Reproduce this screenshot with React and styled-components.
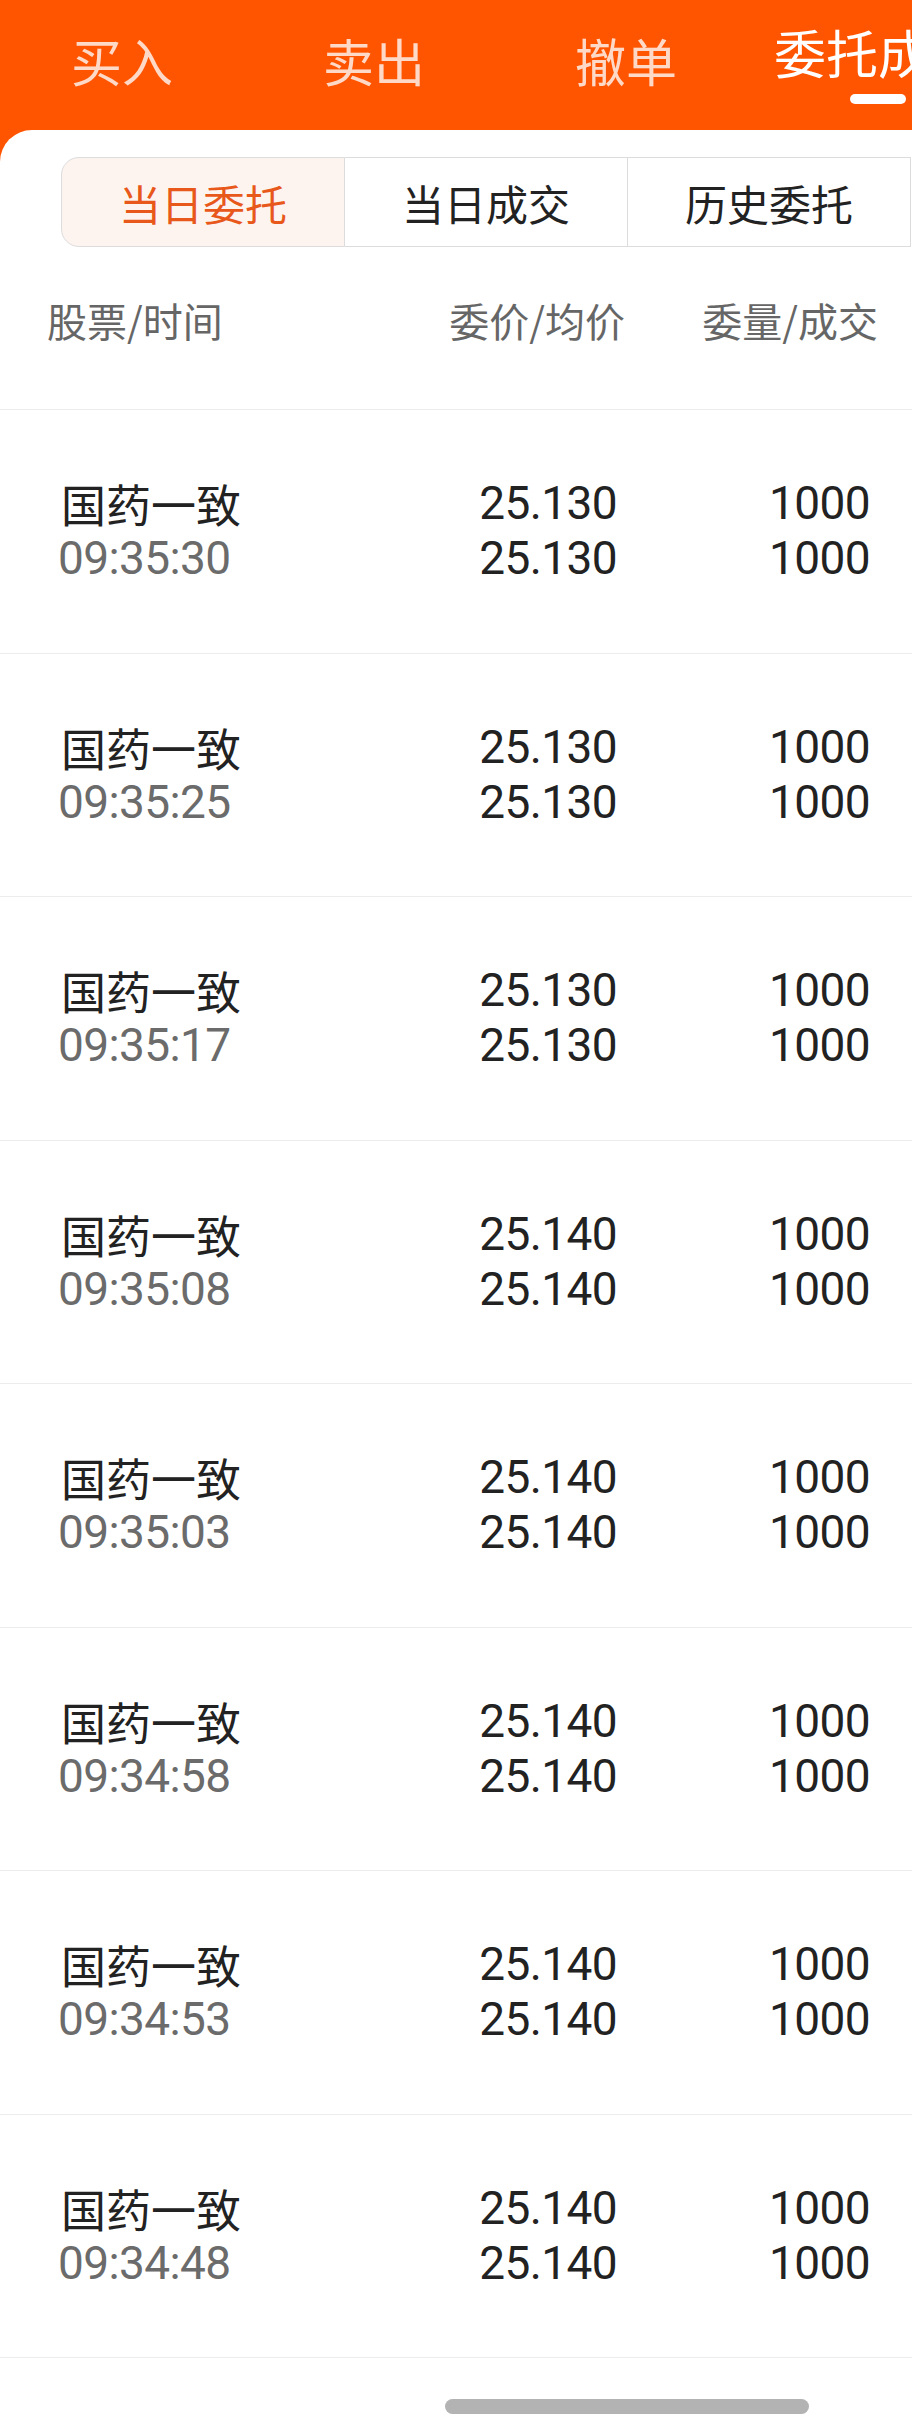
import React from "react";
import styled, { createGlobalStyle } from "styled-components";

const GlobalStyle = createGlobalStyle`
  html, body {
    margin: 0;
    padding: 0;
    background: #ffffff;
  }
  body {
    font-family: Roboto, "Noto Sans CJK SC", "Noto Sans", sans-serif;
    -webkit-font-smoothing: antialiased;
  }
`;

const Shell = styled.div`
  width: 912px;
  height: 2434px;
  overflow: hidden;
  background: #ff5500;
`;

const TopBar = styled.div`
  height: 130px;
  display: flex;
  margin-left: -4px;
`;

const TopTab = styled.div`
  flex: 0 0 252px;
  box-sizing: border-box;
  display: flex;
  flex-direction: column;
  align-items: center;
  justify-content: center;
  padding-bottom: ${({ $active }) => ($active ? "0" : "10px")};
  white-space: nowrap;
  font-family: "Noto Sans CJK SC", sans-serif;
  font-size: ${({ $active }) => ($active ? "52px" : "51px")};
  line-height: 52px;
  color: ${({ $active }) => ($active ? "#ffffff" : "rgba(255, 255, 255, 0.78)")};
`;

const Indicator = styled.span`
  display: block;
  width: 56px;
  height: 10px;
  margin-top: 16px;
  border-radius: 5px;
  background: #ffffff;
`;

const Panel = styled.div`
  background: #ffffff;
  border-top-left-radius: 32px;
  height: 2304px;
`;

const Segments = styled.div`
  display: flex;
  margin: 0 0 0 61px;
  padding-top: 27px;
`;

const Segment = styled.div`
  flex: 0 0 ${({ $w }) => $w}px;
  height: 90px;
  box-sizing: border-box;
  display: flex;
  align-items: center;
  justify-content: center;
  border: 1.5px solid #dcdcdc;
  border-left-width: ${({ $first }) => ($first ? "1.5px" : "0")};
  border-radius: ${({ $first }) => ($first ? "18px 0 0 18px" : "0")};
  background: ${({ $active }) => ($active ? "#fdf4f0" : "#ffffff")};
  color: ${({ $active }) => ($active ? "#e8581a" : "#222222")};
  font-family: "Noto Sans CJK SC", sans-serif;
  font-size: 42px;
`;

const HeadRow = styled.div`
  height: 162px;
  box-sizing: border-box;
  padding: 50px 34px 0 47px;
  display: grid;
  grid-template-columns: 1fr 200px 253px;
  font-family: "Noto Sans CJK SC", sans-serif;
  font-size: 40px;
  line-height: 46px;
  color: #666666;
`;

const Cell = styled.div`
  text-align: ${({ $right }) => ($right ? "right" : "left")};
  white-space: nowrap;
`;

const List = styled.div`
  border-bottom: 1px solid #ececec;
`;

const Row = styled.div`
  height: 243.5px;
  box-sizing: border-box;
  border-top: 1px solid #ececec;
  padding: 0 42px 0 58px;
  display: grid;
  grid-template-columns: 1fr 200px 253px;
  align-items: center;
`;

const Stack = styled.div`
  display: flex;
  flex-direction: column;
  align-items: ${({ $right }) => ($right ? "flex-end" : "flex-start")};
`;

const Name = styled.span`
  font-family: "Noto Sans CJK SC", sans-serif;
  font-size: 45px;
  line-height: 55px;
  color: #222222;
  padding-left: 3px;
`;

const Num = styled.span`
  font-family: Roboto, sans-serif;
  font-size: 46px;
  line-height: 55px;
  letter-spacing: -0.6px;
  color: ${({ $muted }) => ($muted ? "#6b6b6b" : "#222222")};
`;

const HomeBar = styled.div`
  width: 364px;
  height: 15px;
  margin: 41px 0 0 445px;
  border-radius: 8px;
  background: #b3b3b3;
`;

const orders = [
  { time: "09:35:30", price: "25.130" },
  { time: "09:35:25", price: "25.130" },
  { time: "09:35:17", price: "25.130" },
  { time: "09:35:08", price: "25.140" },
  { time: "09:35:03", price: "25.140" },
  { time: "09:34:58", price: "25.140" },
  { time: "09:34:53", price: "25.140" },
  { time: "09:34:48", price: "25.140" },
];

const tabs = ["买入", "卖出", "撤单", "委托成交"];

export default function App() {
  return (
    <>
      <GlobalStyle />
      <Shell>
        <TopBar>
          {tabs.map((t, i) => (
            <TopTab key={t} $active={i === 3}>
              {t}
              {i === 3 && <Indicator />}
            </TopTab>
          ))}
        </TopBar>
        <Panel>
          <Segments>
            <Segment $w={284} $first $active>
              当日委托
            </Segment>
            <Segment $w={283}>当日成交</Segment>
            <Segment $w={283}>历史委托</Segment>
          </Segments>
          <HeadRow>
            <Cell>股票/时间</Cell>
            <Cell $right>委价/均价</Cell>
            <Cell $right>委量/成交</Cell>
          </HeadRow>
          <List>
            {orders.map((o) => (
              <Row key={o.time}>
                <Stack>
                  <Name>国药一致</Name>
                  <Num $muted>{o.time}</Num>
                </Stack>
                <Stack $right>
                  <Num>{o.price}</Num>
                  <Num>{o.price}</Num>
                </Stack>
                <Stack $right>
                  <Num>1000</Num>
                  <Num>1000</Num>
                </Stack>
              </Row>
            ))}
          </List>
          <HomeBar />
        </Panel>
      </Shell>
    </>
  );
}
